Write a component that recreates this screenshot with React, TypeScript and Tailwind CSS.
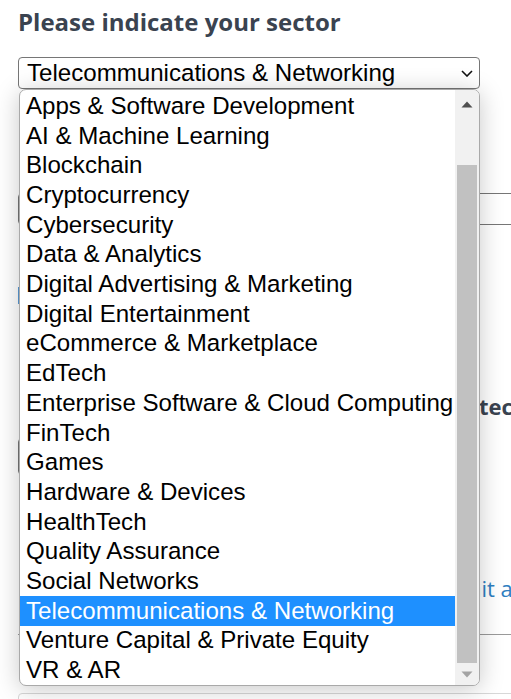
import React from "react";

const options = [
  "Apps & Software Development",
  "AI & Machine Learning",
  "Blockchain",
  "Cryptocurrency",
  "Cybersecurity",
  "Data & Analytics",
  "Digital Advertising & Marketing",
  "Digital Entertainment",
  "eCommerce & Marketplace",
  "EdTech",
  "Enterprise Software & Cloud Computing",
  "FinTech",
  "Games",
  "Hardware & Devices",
  "HealthTech",
  "Quality Assurance",
  "Social Networks",
  "Telecommunications & Networking",
  "Venture Capital & Private Equity",
  "VR & AR",
];

const selected = "Telecommunications & Networking";

export default function App() {
  return (
    <div
      className="relative w-[511px] h-[699px] overflow-hidden bg-white"
      style={{ fontFamily: '"Liberation Sans", Arial, sans-serif' }}
    >
      {/* Page behind */}
      <div className="flex flex-col pl-[18px] pt-[6px]">
        <h2
          className="text-[24px] leading-[32px] font-bold text-[#3a4350] whitespace-nowrap"
          style={{ fontFamily: '"Open Sans", sans-serif' }}
        >
          Please indicate your sector
        </h2>
        <div className="mt-[19px] flex h-[32px] w-[462px] items-center justify-between rounded-[4px] border border-[#767676] pl-[8px] pr-[6px] text-[24.1px] text-black">
          <span className="leading-none">{selected}</span>
          <svg width="12" height="7" viewBox="0 0 12 7">
            <path d="M1 1 L6 6 L11 1" fill="none" stroke="#111" strokeWidth="1.6" />
          </svg>
        </div>
        <div className="mt-[104px] h-[32px] w-[520px] rounded-[4px] border border-[#767676]" />
        <div className="mt-[62px] h-[17px] w-[4px] bg-[#5b9bd5]" />
        <div className="mt-[90px] flex items-start">
          <div className="h-[18px] w-[4px] bg-[#3a4350]" />
          <span
            className="ml-[434px] text-[22px] leading-[24px] font-bold text-[#3a4350] whitespace-nowrap"
            style={{ fontFamily: '"Open Sans", sans-serif' }}
          >
            detected
          </span>
        </div>
        <div className="mt-[20px] h-[37px] w-[462px] rounded-[4px] border border-[#767676]" />
        <div
          className="mt-[100px] pl-[404px] text-[22px] leading-[26px] text-[#2f7fc1] whitespace-nowrap"
          style={{ fontFamily: '"Open Sans", sans-serif' }}
        >
          Submit a request
        </div>
        <div className="mt-[33px] h-[1px] w-[520px] bg-[#9a9a9a]" />
        <div className="mt-[58px] h-[20px] w-[520px] rounded-[4px] border border-[#d8d8d8]" />
      </div>

      {/* Dropdown popup */}
      <div className="absolute left-[19px] top-[89px] flex h-[597px] w-[461px] overflow-hidden rounded-[7px] border border-[#a9a9a9] bg-white shadow-[0_3px_24px_rgba(0,0,0,0.22)]">
        <ul className="flex flex-1 flex-col pt-[1px]">
          {options.map((o) => (
            <li
              key={o}
              className={`flex h-[29.8px] items-center whitespace-nowrap pl-[6px] text-[24.1px] leading-none ${
                o === selected ? "bg-[#1e90ff] text-white" : "text-black"
              }`}
            >
              {o}
            </li>
          ))}
        </ul>
        <div className="flex w-[24px] flex-col bg-[#f1f1f1]">
          <div className="flex h-[28px] items-center justify-center pr-[1px]">
            <svg width="12" height="7" viewBox="0 0 12 7">
              <path d="M6 0.5 L11.5 6.5 L0.5 6.5 Z" fill="#505050" />
            </svg>
          </div>
          <div className="h-[47px]" />
          <div className="ml-[2px] mr-[2px] h-[498px] bg-[#c1c1c1]" />
          <div className="flex flex-1 items-center justify-center pr-[1px]">
            <svg width="12" height="7" viewBox="0 0 12 7">
              <path d="M0.5 0.5 L11.5 0.5 L6 6.5 Z" fill="#a3a3a3" />
            </svg>
          </div>
        </div>
      </div>
    </div>
  );
}
